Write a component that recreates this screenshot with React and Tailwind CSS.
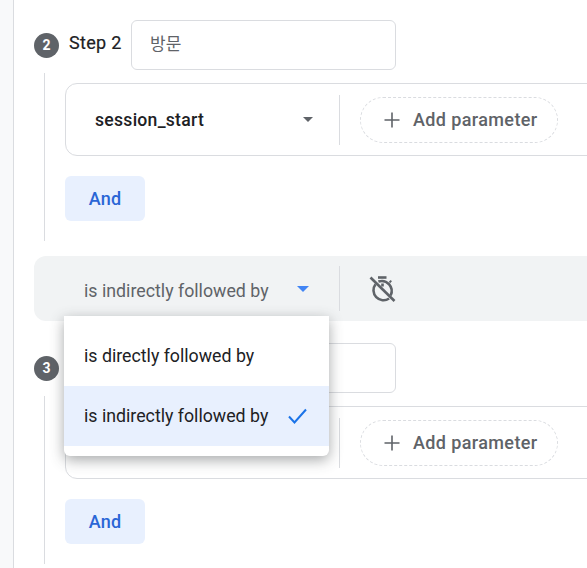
import React from "react";

const F = { fontFamily: "Roboto, 'Noto Sans CJK KR', sans-serif" };

function Caret({ className }) {
  return (
    <svg className={className} viewBox="0 0 10 5" fill="currentColor"><path d="M0 0h10L5 5z" /></svg>
  );
}

function EventCard({ label }) {
  return (
    <div className="flex h-[73px] w-[640px] items-center rounded-xl border border-[#dadce0] bg-white">
      <div className="flex h-[50px] w-[274px] shrink-0 items-center border-r border-[#dadce0] pl-[29px]">
        <span className="w-[208px] text-[17.6px] leading-5 font-medium tracking-[0.26px] text-[#202124]">{label}</span>
        {label && <Caret className="h-[5px] w-[10px] text-[#5f6368]" />}
      </div>
      <div className="ml-5 flex h-[46px] w-[198px] items-center rounded-[23px] border border-dashed border-[#dadce0] pl-[23px]">
        <svg className="h-[16px] w-[16px] text-[#5f6368]" viewBox="0 0 16 16" fill="none" stroke="currentColor" strokeWidth="1.6"><path d="M8 0.5v15M0.5 8h15" /></svg>
        <span className="ml-[13px] text-[18px] leading-5 font-medium tracking-[0.38px] text-[#5f6368]">Add parameter</span>
      </div>
    </div>
  );
}

function Step({ n, title, value, label, lineH }) {
  return (
    <section>
      <div className="flex h-[50px] items-center">
        <div className="flex h-[25px] w-[25px] items-center justify-center rounded-full bg-[#5f6368] text-[14px] font-bold text-white">{n}</div>
        <span className="mb-[4px] ml-[10px] w-[62px] text-[18px] leading-5 tracking-[0.3px] text-[#202124]" style={{ WebkitTextStroke: "0.2px #202124" }}>{title}</span>
        <div className="flex h-[50px] w-[265px] items-center rounded-md border border-[#dadce0] bg-white pl-[18px] text-[17px] text-[#5f6368]">{value}</div>
      </div>
      <div className="ml-[10px] mt-[3px] border-l border-[#dadce0] pl-[20px] pt-[10px]" style={{ height: lineH }}>
        <EventCard label={label} />
        <button className="mt-5 h-[45px] w-[80px] rounded-md bg-[#e8f0fe] text-[18px] font-medium tracking-[0.2px] text-[#2a66d6]">And</button>
      </div>
    </section>
  );
}

export default function App() {
  return (
    <div className="flex h-[568px] w-[587px] overflow-hidden bg-white" style={F}>
      <div className="h-full w-[14px] shrink-0 border-r border-[#dadce0] bg-[#f8f9fa]" />
      <div className="relative min-w-0 flex-1 pt-5">
        <div className="pl-5">
          <Step n="2" title="Step 2" value="방문" label="session_start" lineH={168} />
        </div>
        <div className="mt-[15px] ml-5 flex h-[65px] w-[700px] items-center rounded-l-xl bg-[#f1f3f4]">
          <span className="ml-[50px] mt-[4px] w-[212px] text-[17.8px] leading-6 text-[#5f6368]">is indirectly followed by</span>
          <Caret className="h-[6px] w-[14px] text-[#4285f4]" />
          <div className="ml-[29px] h-[45px] w-px bg-[#dadce0]" />
          <svg className="ml-[28px] h-[28px] w-[28px] text-[#5f6368]" viewBox="0 0 28 28" fill="none" stroke="currentColor" strokeWidth="2.6">
            <path d="M10 2.5h8.5" />
            <path d="M7.5 9.2a10 10 0 0 0 13.6 14.3M22.6 20.5A10 10 0 0 0 10.4 6.6" />
            <path d="M14.5 8.5v3" />
            <path d="M21.5 7.5l1.8-1.8" strokeWidth="1.8" />
            <path d="M2.5 2.5l24 23.5" />
          </svg>
        </div>
        <div className="mt-[22px] pl-5">
          <Step n="3" title="" value="" label="" lineH={168} />
        </div>
        <div className="absolute top-[316px] left-[50px] z-10 h-[140px] w-[265px] rounded-b-md bg-white pt-[10px] shadow-[0_4px_14px_rgba(60,64,67,0.45)]">
          <div className="flex h-[60px] items-center pl-5 text-[17.75px] leading-6 text-[#202124]">is directly followed by</div>
          <div className="flex h-[60px] items-center bg-[#e8f0fe] pl-5 text-[17.75px] leading-6 text-[#202124]">
            <span className="w-[204px]">is indirectly followed by</span>
            <svg className="h-[16px] w-[19px] text-[#1a73e8]" viewBox="0 0 19 16" fill="none" stroke="currentColor" strokeWidth="2"><path d="M1 8.5l5.5 6L18 1.5" /></svg>
          </div>
        </div>
      </div>
    </div>
  );
}
